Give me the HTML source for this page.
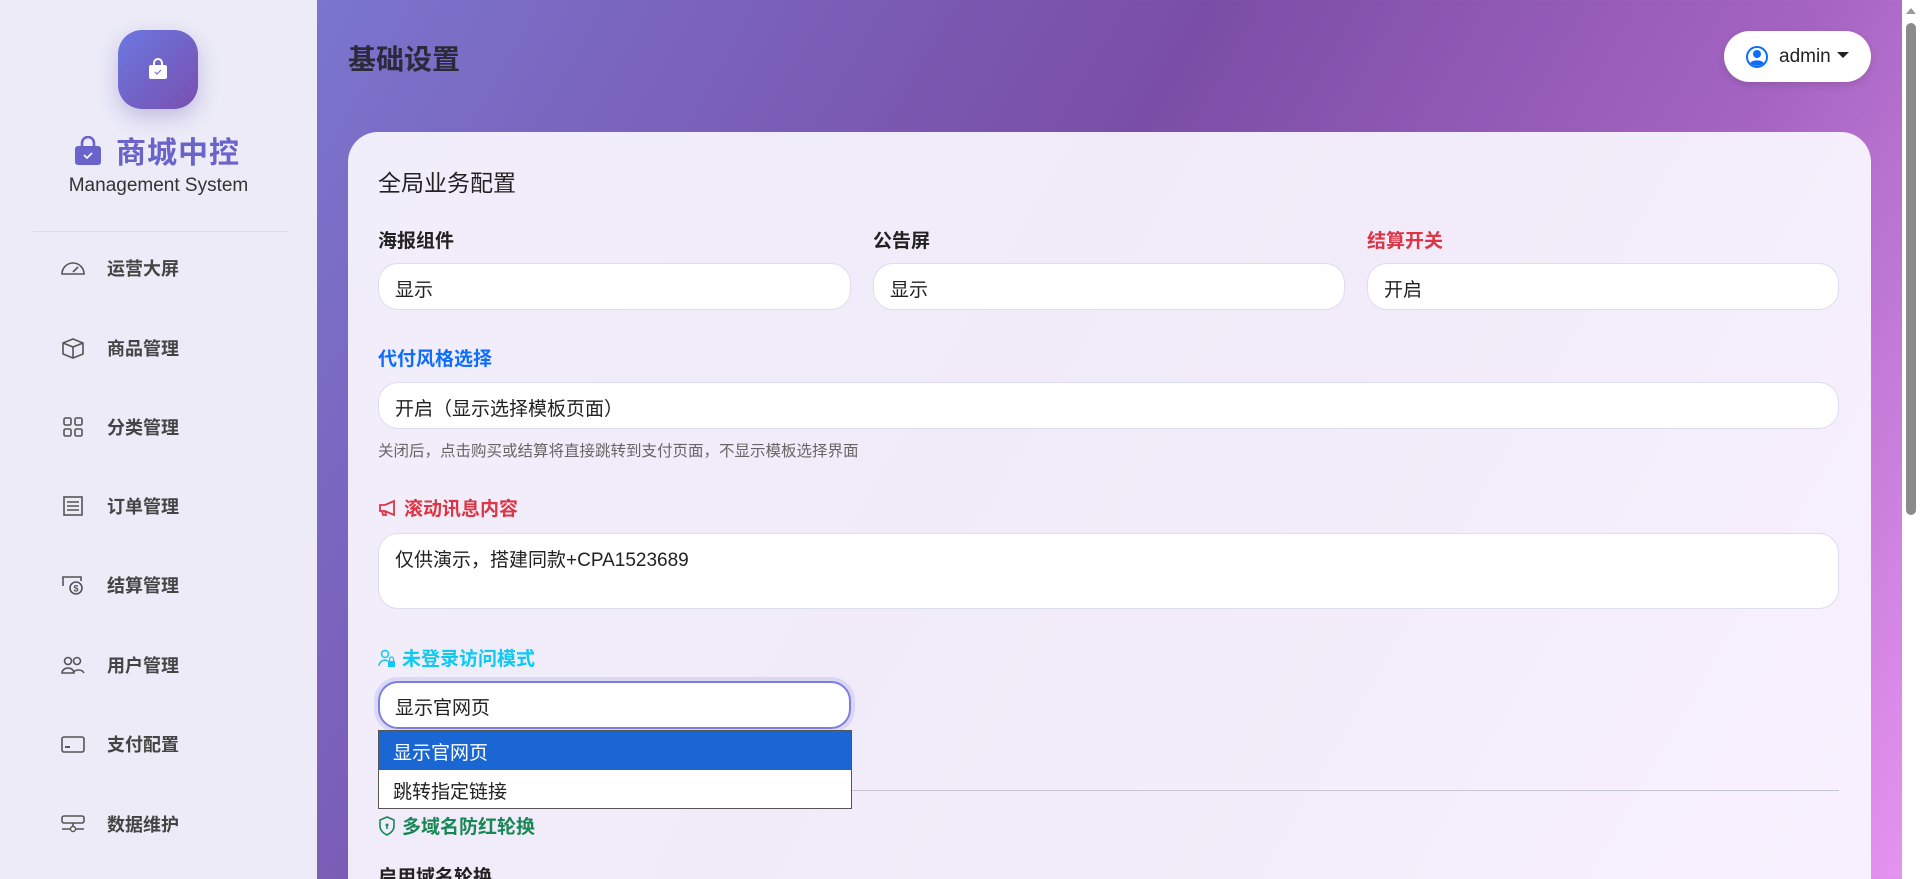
<!DOCTYPE html>
<html style="width:1920px;height:879px;overflow:hidden"><head><meta charset="utf-8"><style>
*{box-sizing:border-box;margin:0;padding:0}
body{width:1920px;height:879px;overflow:hidden;font-family:"Liberation Sans","Noto Sans CJK SC",sans-serif;position:relative;background:linear-gradient(120deg,#7b84dc 0%,#7a62bb 30%,#7a4ea6 50%,#a564c2 75%,#e894f2 100%)}
.side{position:absolute;left:0;top:0;width:317px;height:879px;background:#ecebf7}
.logo{position:absolute;left:118px;top:30px;width:80px;height:79px;border-radius:24px;background:linear-gradient(135deg,#6a78e0,#7a4fb0);box-shadow:0 8px 20px rgba(100,80,180,.3)}
.brand{position:absolute;left:74px;top:128px;font-size:30px;font-weight:bold;color:#6a63c9;letter-spacing:1px}
.sub{position:absolute;left:0;width:317px;top:175px;text-align:center;font-size:19px;color:#333}
.div{position:absolute;left:33px;width:256px;top:231px;border-top:1px solid #dcdbe8}
.mi{position:absolute;left:60px;height:30px;display:flex;align-items:center;font-size:18px;font-weight:bold;color:#444}
.mi svg{width:26px;height:22px;margin-right:21px}
.title{position:absolute;left:348px;top:38px;font-size:28px;font-weight:bold;color:#2a2a3a}
.admin{position:absolute;left:1724px;top:31px;width:147px;height:51px;border-radius:26px;background:#fff;display:flex;align-items:center;padding-left:21px;font-size:19px;color:#222;box-shadow:0 3px 8px rgba(0,0,0,.12)}
.card{position:absolute;left:348px;top:132px;width:1523px;height:747px;border-radius:30px 30px 0 0;background:rgba(250,248,255,.93)}
.scroll{position:absolute;left:1902px;top:0;width:18px;height:879px;background:#fff}
.thumb{position:absolute;left:1906px;top:23px;width:10px;height:492px;border-radius:5px;background:#8a8a8a}
.lab{position:absolute;font-size:19px;font-weight:bold;color:#222;display:flex;align-items:center;gap:6px;white-space:nowrap}
.inp{position:absolute;height:47px;background:#fff;border:1px solid #dedcf0;border-radius:20px;font-size:19px;color:#222;padding:11px 16px}
.help{position:absolute;left:378px;top:439px;font-size:15.5px;color:#666}
</style></head><body>
<div class="side">
<div class="logo"><svg style="position:absolute;left:30px;top:28px" width="20" height="22" viewBox="0 0 20 22"><path d="M6 7V5a4 4 0 0 1 8 0v2" stroke="#fff" stroke-width="2" fill="none"/><rect x="1" y="7" width="18" height="14" rx="2" fill="#fff"/><path d="M7 14l2 2 4-4" stroke="#7a6fd0" stroke-width="1.2" fill="none"/></svg></div>
<div class="brand"><svg width="28" height="30" viewBox="0 0 28 30" style="vertical-align:-3px;margin-right:14px"><path d="M8 10V7a6 6 0 0 1 12 0v3" stroke="#6a63c9" stroke-width="2.6" fill="none"/><rect x="1" y="10" width="26" height="19" rx="3" fill="#6a63c9"/><path d="M10 19l3 3 5-5" stroke="#fff" stroke-width="1.6" fill="none"/></svg>商城中控</div>
<div class="sub">Management System</div>
<div class="div"></div>
<div class="mi" style="top:253px"><svg viewBox="0 0 26 22"><path d="M2 17a11 11 0 1 1 22 0z" fill="none" stroke="#555" stroke-width="1.6"/><path d="M13 15l5-5" stroke="#555" stroke-width="1.6"/></svg>运营大屏</div>
<div class="mi" style="top:333px"><svg viewBox="0 0 26 22"><path d="M3 6l10-4 10 4v11l-10 4-10-4z M3 6l10 4 10-4 M13 10v11" fill="none" stroke="#555" stroke-width="1.6"/></svg>商品管理</div>
<div class="mi" style="top:412px"><svg viewBox="0 0 26 22"><rect x="4" y="2" width="7" height="7" rx="1.5" fill="none" stroke="#555" stroke-width="1.6"/><rect x="15" y="2" width="7" height="7" rx="1.5" fill="none" stroke="#555" stroke-width="1.6"/><rect x="4" y="13" width="7" height="7" rx="1.5" fill="none" stroke="#555" stroke-width="1.6"/><rect x="15" y="13" width="7" height="7" rx="1.5" fill="none" stroke="#555" stroke-width="1.6"/></svg>分类管理</div>
<div class="mi" style="top:491px"><svg viewBox="0 0 26 22"><rect x="4" y="2" width="18" height="18" fill="none" stroke="#555" stroke-width="1.6"/><path d="M7 7h12M7 11h12M7 15h12" stroke="#555" stroke-width="1.4"/></svg>订单管理</div>
<div class="mi" style="top:570px"><svg viewBox="0 0 26 22"><path d="M3 12V3h18v4" fill="none" stroke="#555" stroke-width="1.6"/><circle cx="16" cy="14" r="6" fill="none" stroke="#555" stroke-width="1.6"/><text x="13.5" y="17.5" font-size="9" fill="#555">$</text></svg>结算管理</div>
<div class="mi" style="top:650px"><svg viewBox="0 0 26 22"><circle cx="8" cy="7" r="3.5" fill="none" stroke="#555" stroke-width="1.6"/><circle cx="17" cy="7" r="3.5" fill="none" stroke="#555" stroke-width="1.6"/><path d="M2 19a6 5 0 0 1 12 0zM13 19a6 5 0 0 1 11 0" fill="none" stroke="#555" stroke-width="1.6"/></svg>用户管理</div>
<div class="mi" style="top:729px"><svg viewBox="0 0 26 22"><rect x="2" y="4" width="22" height="15" rx="2" fill="none" stroke="#555" stroke-width="1.6"/><path d="M5 14h5" stroke="#555" stroke-width="2"/></svg>支付配置</div>
<div class="mi" style="top:809px"><svg viewBox="0 0 26 22"><rect x="2" y="3" width="22" height="7" rx="2" fill="none" stroke="#555" stroke-width="1.6"/><path d="M13 10v6M2 16h22" stroke="#555" stroke-width="1.6"/><circle cx="13" cy="16" r="2.5" fill="#fff" stroke="#555" stroke-width="1.4"/></svg>数据维护</div>
</div>
<div class="title">基础设置</div>
<div class="admin"><svg width="24" height="24" viewBox="0 0 24 24" style="margin-right:10px"><circle cx="12" cy="12" r="10" fill="none" stroke="#0d6efd" stroke-width="2"/><circle cx="12" cy="9" r="4" fill="#0d6efd"/><path d="M5 18a8 5 0 0 1 14 0a10 10 0 0 1-14 0z" fill="#0d6efd"/></svg>admin<span style="margin-left:6px;border-left:6px solid transparent;border-right:6px solid transparent;border-top:6px solid #222;display:inline-block;transform:translateY(-2px)"></span></div>
<div class="card"></div>
<div style="position:absolute;left:378px;top:164px;font-size:23px;color:#222">全局业务配置</div>
<div class="lab" style="left:378px;top:226px">海报组件</div>
<div class="lab" style="left:873px;top:226px">公告屏</div>
<div class="lab" style="left:1367px;top:226px;color:#dc3545">结算开关</div>
<div class="inp" style="left:378px;top:263px;width:473px">显示</div>
<div class="inp" style="left:873px;top:263px;width:472px">显示</div>
<div class="inp" style="left:1367px;top:263px;width:472px">开启</div>
<div class="lab" style="left:378px;top:344px;color:#0d6efd">代付风格选择</div>
<div class="inp" style="left:378px;top:382px;width:1461px">开启（显示选择模板页面）</div>
<div class="help">关闭后，点击购买或结算将直接跳转到支付页面，不显示模板选择界面</div>
<div class="lab" style="left:378px;top:494px;color:#dc3545"><svg width="20" height="18" viewBox="0 0 20 18"><path d="M2 6h5l9-4v14l-9-4H2z M4 12l1 4h3l-1-4" fill="none" stroke="#dc3545" stroke-width="1.8"/></svg>滚动讯息内容</div>
<div class="inp" style="left:378px;top:533px;width:1461px;height:76px">仅供演示，搭建同款+CPA1523689</div>
<div class="lab" style="left:378px;top:644px;color:#0dcaf0"><svg width="18" height="20" viewBox="0 0 18 20"><circle cx="7" cy="6" r="3.5" fill="none" stroke="#0dcaf0" stroke-width="1.5"/><path d="M1 18a6 6 0 0 1 9-5" fill="none" stroke="#0dcaf0" stroke-width="1.5"/><rect x="10" y="13" width="7" height="6" fill="#0dcaf0"/><path d="M11.5 13v-2a2 2 0 0 1 4 0v2" fill="none" stroke="#0dcaf0" stroke-width="1.3"/></svg>未登录访问模式</div>
<div style="position:absolute;left:378px;top:790px;width:1461px;border-top:1px solid #c8c6d4"></div>
<div class="inp" style="left:378px;top:681px;width:473px;height:48px;border:2px solid #7b7fe0;box-shadow:0 0 0 4px rgba(120,120,230,.18);padding:10px 15px">显示官网页</div>
<div style="position:absolute;left:378px;top:730px;width:474px;height:79px;background:#fff;border:1px solid #555;font-size:19px">
<div style="height:39px;background:#1a66d2;color:#fff;padding:7px 14px">显示官网页</div>
<div style="padding:7px 14px;color:#222">跳转指定链接</div></div>
<div class="lab" style="left:378px;top:812px;color:#198754;font-weight:bold"><svg width="18" height="20" viewBox="0 0 18 20"><path d="M9 1l7 3v6c0 4-3 7-7 9-4-2-7-5-7-9V4z" fill="none" stroke="#198754" stroke-width="1.6"/><circle cx="9" cy="9" r="1.5" fill="#198754"/><path d="M9 10v3" stroke="#198754" stroke-width="1.5"/></svg>多域名防红轮换</div>
<div class="lab" style="left:378px;top:862px">启用域名轮换</div>
<div class="scroll"></div><div class="thumb"></div>
<div style="position:absolute;left:1906px;top:8px;border-left:5px solid transparent;border-right:5px solid transparent;border-bottom:6px solid #999"></div>
</body></html>
